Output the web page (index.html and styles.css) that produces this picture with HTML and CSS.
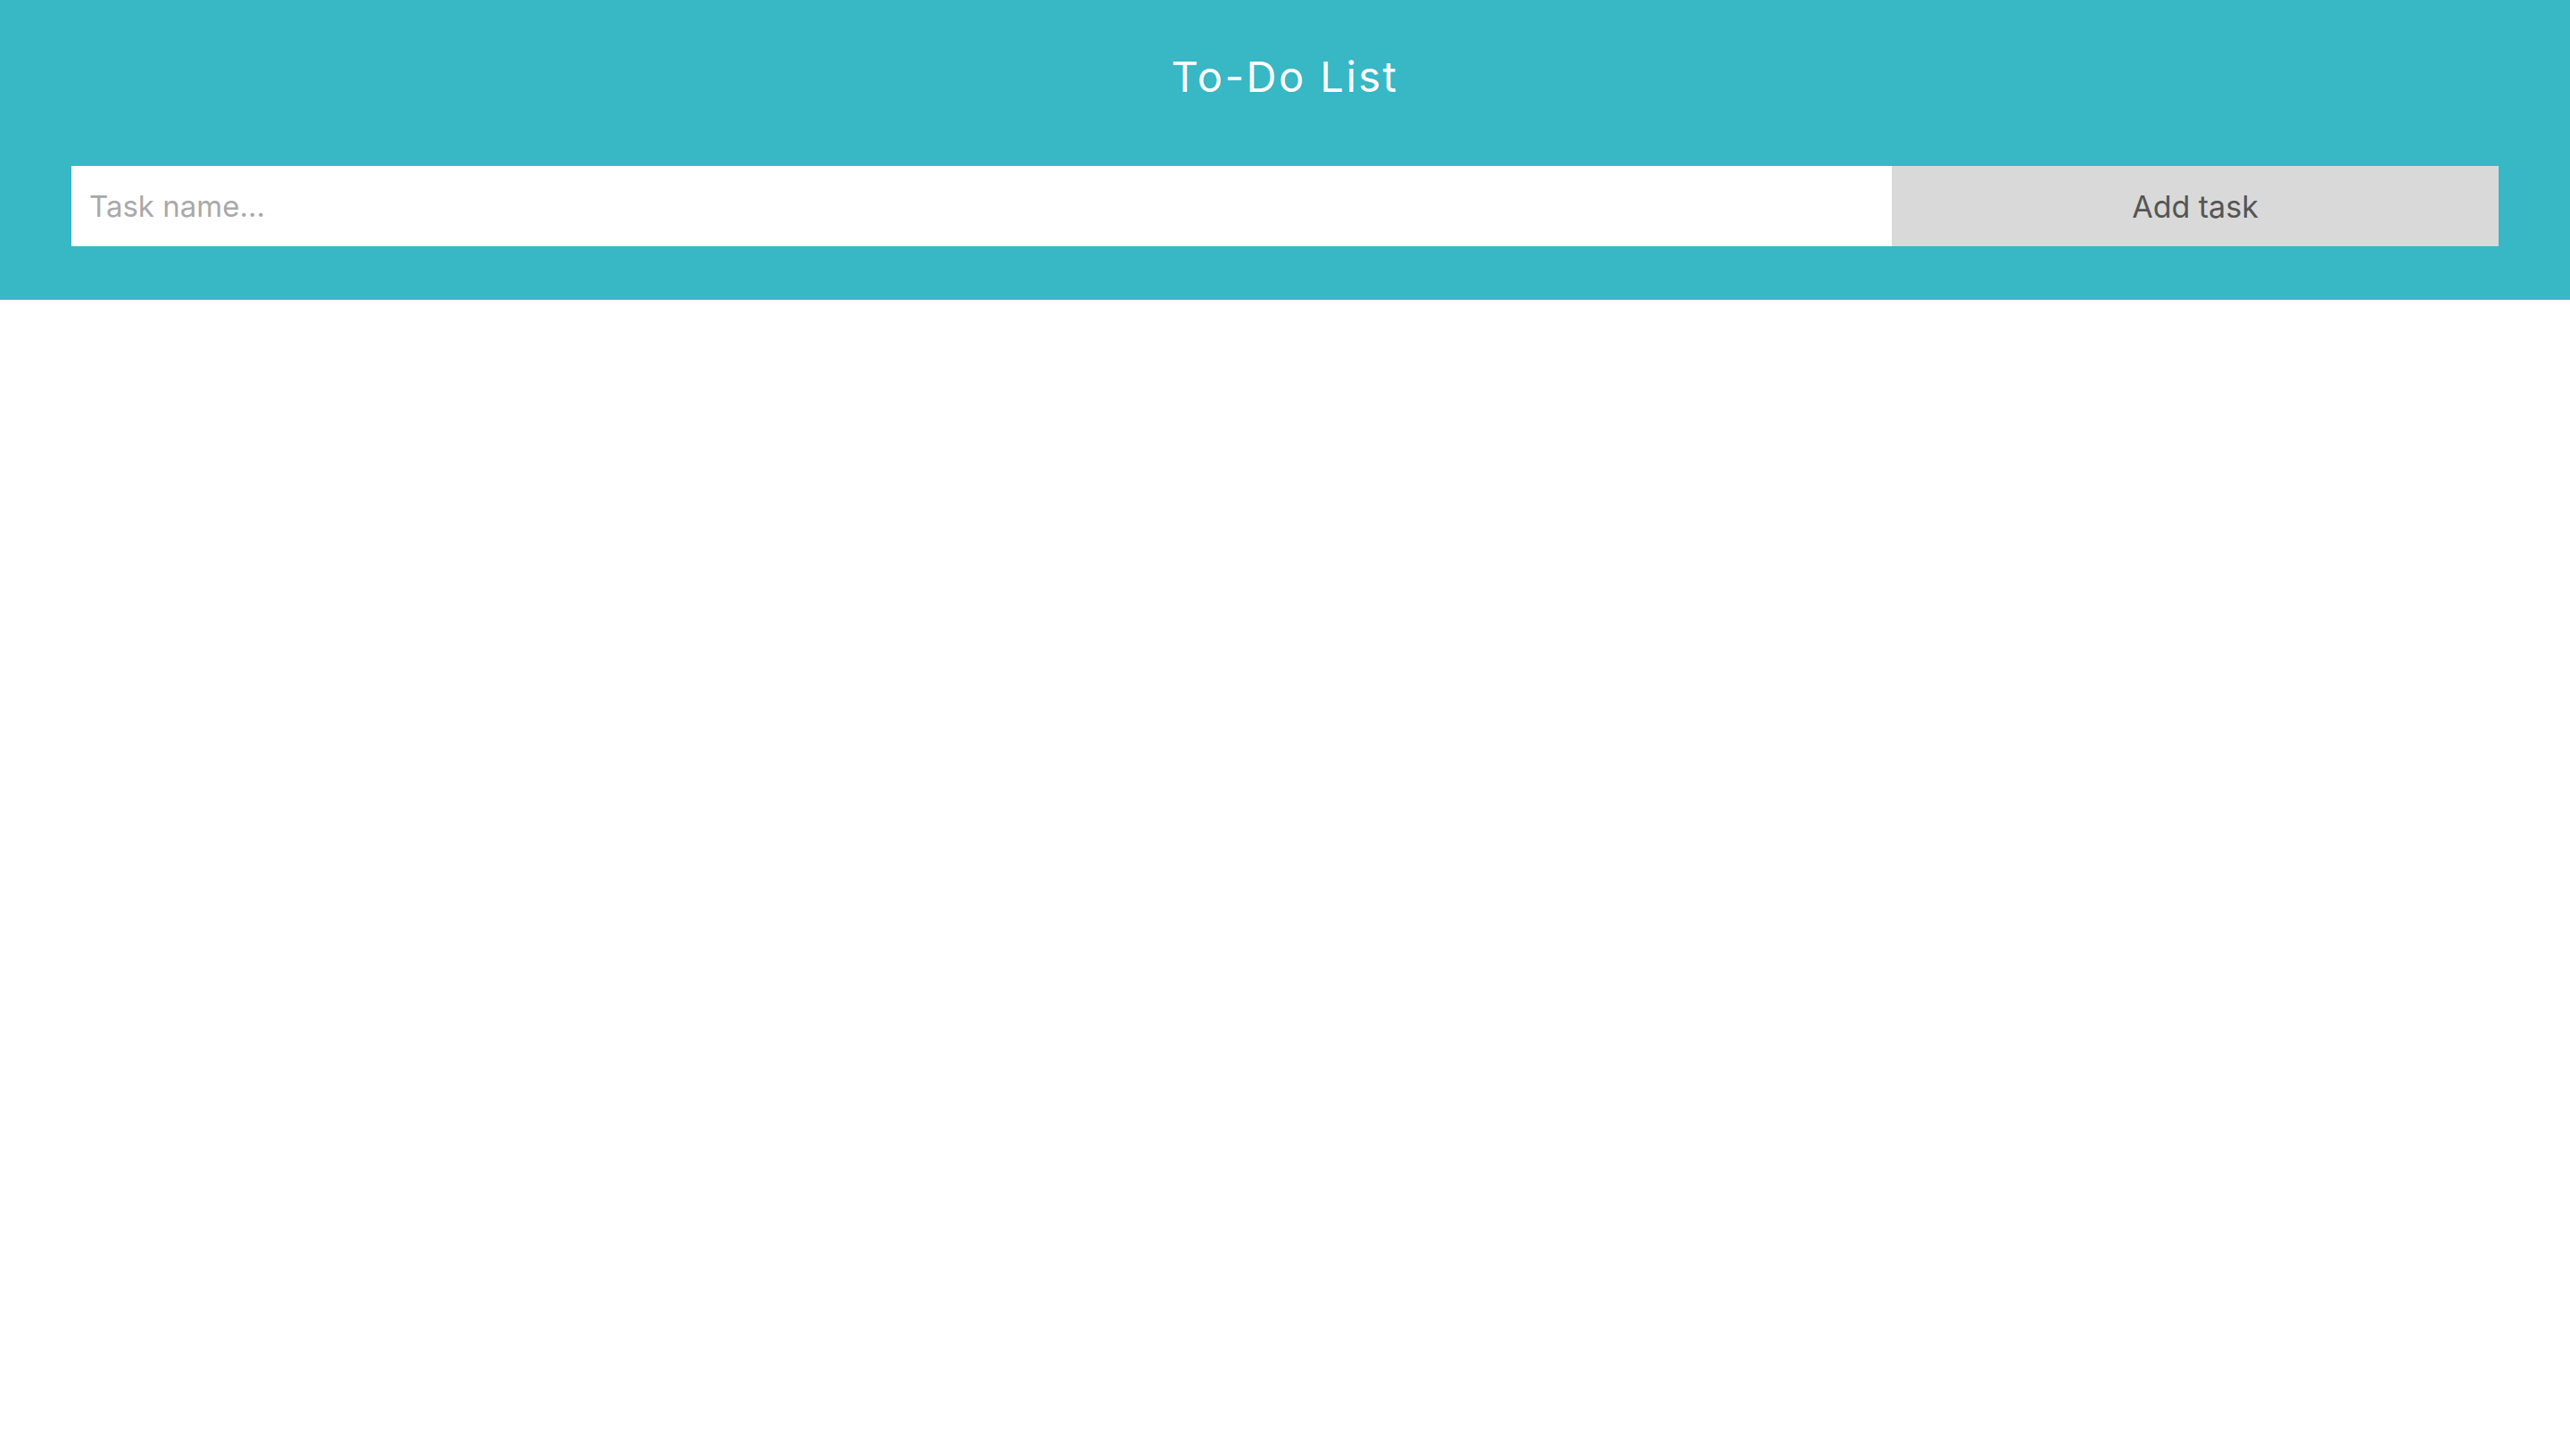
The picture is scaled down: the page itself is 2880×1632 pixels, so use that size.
FILE: index.html
```html
<!DOCTYPE html>
<html lang="en">
<head>
<meta charset="utf-8">
<title>To-Do List</title>
<link rel="stylesheet" href="styles.css">
</head>
<body>
<header class="header">
  <h1 class="title">To-Do List</h1>
  <form class="add-form" onsubmit="return false;">
    <input class="task-input" type="text" placeholder="Task name...">
    <button class="add-btn" type="submit">Add task</button>
  </form>
</header>
<main class="list"></main>
</body>
</html>
```

FILE: styles.css
```css
* { box-sizing: border-box; }
html, body { margin: 0; padding: 0; background: #ffffff; }
body { font-family: Inter, "Open Sans", sans-serif; }

.header {
  background: #38b7c5;
  padding: 62px 80px 60px;
  display: flex;
  flex-direction: column;
  gap: 76px;
}

.title {
  margin: 0;
  text-align: center;
  color: #ffffff;
  font-weight: 400;
  font-size: 47px;
  line-height: 48px;
  letter-spacing: 2.5px;
}

.add-form {
  display: flex;
  height: 90px;
}

.task-input {
  flex: 0 0 75%;
  border: none;
  outline: none;
  margin: 0;
  padding: 0 20px;
  font-family: inherit;
  font-size: 33px;
  color: #555;
  background: #fff;
}
.task-input::placeholder { color: #a9a9a9; }

.add-btn {
  flex: 1 1 auto;
  border: none;
  margin: 0;
  background: #d9d9d9;
  color: #555555;
  font-family: inherit;
  font-size: 34px;
  cursor: pointer;
}
```
